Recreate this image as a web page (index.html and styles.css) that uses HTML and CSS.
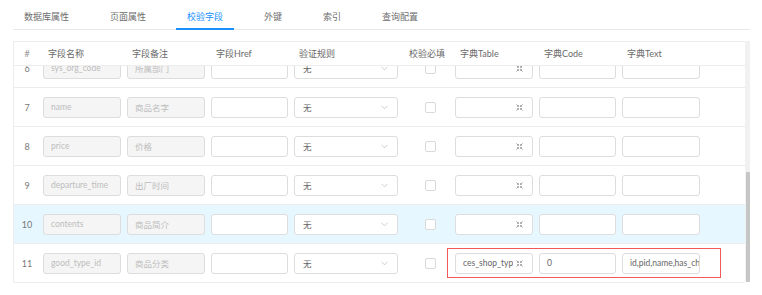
FILE: index.html
```html
<!DOCTYPE html>
<html lang="zh">
<head>
<meta charset="utf-8">
<link rel="stylesheet" href="styles.css">
</head>
<body>
<div class="page">
  <div class="tabs">
    <div class="tab">数据库属性</div>
    <div class="tab">页面属性</div>
    <div class="tab active">校验字段</div>
    <div class="tab">外键</div>
    <div class="tab">索引</div>
    <div class="tab">查询配置</div>
  </div>
  <div class="table-wrap">
    <div class="table">
      <div class="row head">
        <div class="c num">#</div>
        <div class="c">字段名称</div>
        <div class="c">字段备注</div>
        <div class="c">字段Href</div>
        <div class="c">验证规则</div>
        <div class="c">校验必填</div>
        <div class="c">字典Table</div>
        <div class="c">字典Code</div>
        <div class="c">字典Text</div>
        <div class="c"></div>
      </div>
      <div class="body">
        <div class="row first">
          <div class="c num">6</div>
          <div class="c"><div class="inp dis">sys_org_code</div></div>
          <div class="c"><div class="inp dis">所属部门</div></div>
          <div class="c"><div class="inp"></div></div>
          <div class="c"><div class="sel"><span>无</span><svg class="arrow" viewBox="0 0 8 5"><polyline points="0.5,0.5 4,4 7.5,0.5"/></svg></div></div>
          <div class="c chk"><div class="box"></div></div>
          <div class="c"><div class="inp icon-inp"><span class="val"></span><svg class="ex" viewBox="0 0 8 8"><path d="M0.5 0.5 L2.8 2.8 M2.8 1.4 V2.8 H1.4 M7.5 0.5 L5.2 2.8 M5.2 1.4 V2.8 H6.6 M0.5 7.5 L2.8 5.2 M2.8 6.6 V5.2 H1.4 M7.5 7.5 L5.2 5.2 M5.2 6.6 V5.2 H6.6"/></svg></div></div>
          <div class="c"><div class="inp"></div></div>
          <div class="c"><div class="inp"></div></div>
          <div class="c"></div>
        </div>
        <div class="row">
          <div class="c num">7</div>
          <div class="c"><div class="inp dis">name</div></div>
          <div class="c"><div class="inp dis">商品名字</div></div>
          <div class="c"><div class="inp"></div></div>
          <div class="c"><div class="sel"><span>无</span><svg class="arrow" viewBox="0 0 8 5"><polyline points="0.5,0.5 4,4 7.5,0.5"/></svg></div></div>
          <div class="c chk"><div class="box"></div></div>
          <div class="c"><div class="inp icon-inp"><span class="val"></span><svg class="ex" viewBox="0 0 8 8"><path d="M0.5 0.5 L2.8 2.8 M2.8 1.4 V2.8 H1.4 M7.5 0.5 L5.2 2.8 M5.2 1.4 V2.8 H6.6 M0.5 7.5 L2.8 5.2 M2.8 6.6 V5.2 H1.4 M7.5 7.5 L5.2 5.2 M5.2 6.6 V5.2 H6.6"/></svg></div></div>
          <div class="c"><div class="inp"></div></div>
          <div class="c"><div class="inp"></div></div>
          <div class="c"></div>
        </div>
        <div class="row">
          <div class="c num">8</div>
          <div class="c"><div class="inp dis">price</div></div>
          <div class="c"><div class="inp dis">价格</div></div>
          <div class="c"><div class="inp"></div></div>
          <div class="c"><div class="sel"><span>无</span><svg class="arrow" viewBox="0 0 8 5"><polyline points="0.5,0.5 4,4 7.5,0.5"/></svg></div></div>
          <div class="c chk"><div class="box"></div></div>
          <div class="c"><div class="inp icon-inp"><span class="val"></span><svg class="ex" viewBox="0 0 8 8"><path d="M0.5 0.5 L2.8 2.8 M2.8 1.4 V2.8 H1.4 M7.5 0.5 L5.2 2.8 M5.2 1.4 V2.8 H6.6 M0.5 7.5 L2.8 5.2 M2.8 6.6 V5.2 H1.4 M7.5 7.5 L5.2 5.2 M5.2 6.6 V5.2 H6.6"/></svg></div></div>
          <div class="c"><div class="inp"></div></div>
          <div class="c"><div class="inp"></div></div>
          <div class="c"></div>
        </div>
        <div class="row">
          <div class="c num">9</div>
          <div class="c"><div class="inp dis">departure_time</div></div>
          <div class="c"><div class="inp dis">出厂时间</div></div>
          <div class="c"><div class="inp"></div></div>
          <div class="c"><div class="sel"><span>无</span><svg class="arrow" viewBox="0 0 8 5"><polyline points="0.5,0.5 4,4 7.5,0.5"/></svg></div></div>
          <div class="c chk"><div class="box"></div></div>
          <div class="c"><div class="inp icon-inp"><span class="val"></span><svg class="ex" viewBox="0 0 8 8"><path d="M0.5 0.5 L2.8 2.8 M2.8 1.4 V2.8 H1.4 M7.5 0.5 L5.2 2.8 M5.2 1.4 V2.8 H6.6 M0.5 7.5 L2.8 5.2 M2.8 6.6 V5.2 H1.4 M7.5 7.5 L5.2 5.2 M5.2 6.6 V5.2 H6.6"/></svg></div></div>
          <div class="c"><div class="inp"></div></div>
          <div class="c"><div class="inp"></div></div>
          <div class="c"></div>
        </div>
        <div class="row hl">
          <div class="c num">10</div>
          <div class="c"><div class="inp dis">contents</div></div>
          <div class="c"><div class="inp dis">商品简介</div></div>
          <div class="c"><div class="inp"></div></div>
          <div class="c"><div class="sel"><span>无</span><svg class="arrow" viewBox="0 0 8 5"><polyline points="0.5,0.5 4,4 7.5,0.5"/></svg></div></div>
          <div class="c chk"><div class="box"></div></div>
          <div class="c"><div class="inp icon-inp"><span class="val"></span><svg class="ex" viewBox="0 0 8 8"><path d="M0.5 0.5 L2.8 2.8 M2.8 1.4 V2.8 H1.4 M7.5 0.5 L5.2 2.8 M5.2 1.4 V2.8 H6.6 M0.5 7.5 L2.8 5.2 M2.8 6.6 V5.2 H1.4 M7.5 7.5 L5.2 5.2 M5.2 6.6 V5.2 H6.6"/></svg></div></div>
          <div class="c"><div class="inp"></div></div>
          <div class="c"><div class="inp"></div></div>
          <div class="c"></div>
        </div>
        <div class="row last">
          <div class="c num">11</div>
          <div class="c"><div class="inp dis">good_type_id</div></div>
          <div class="c"><div class="inp dis">商品分类</div></div>
          <div class="c"><div class="inp"></div></div>
          <div class="c"><div class="sel"><span>无</span><svg class="arrow" viewBox="0 0 8 5"><polyline points="0.5,0.5 4,4 7.5,0.5"/></svg></div></div>
          <div class="c chk"><div class="box"></div></div>
          <div class="c"><div class="inp icon-inp"><span class="val">ces_shop_type</span><svg class="ex" viewBox="0 0 8 8"><path d="M0.5 0.5 L2.8 2.8 M2.8 1.4 V2.8 H1.4 M7.5 0.5 L5.2 2.8 M5.2 1.4 V2.8 H6.6 M0.5 7.5 L2.8 5.2 M2.8 6.6 V5.2 H1.4 M7.5 7.5 L5.2 5.2 M5.2 6.6 V5.2 H6.6"/></svg></div></div>
          <div class="c"><div class="inp val-inp">0</div></div>
          <div class="c"><div class="inp val-inp">id,pid,name,has_child</div></div>
          <div class="c"></div>
          <div class="mark"></div>
        </div>
      </div>
    </div>
    <div class="scrollbar"><div class="thumb"></div></div>
  </div>
</div>
</body>
</html>
```

FILE: styles.css
```css
* { box-sizing: border-box; }
html, body { margin: 0; padding: 0; background: #fff; }
body {
  font-family: Lato, "Noto Sans CJK SC", sans-serif;
  font-size: 9px;
  font-weight: 400;
  color: #666;
}
.page {
  width: 762px;
  height: 295px;
  padding: 0 12px 0 13px;
  overflow: hidden;
}
.tabs {
  display: flex;
  gap: 19px;
  height: 30px;
  border-bottom: 1px solid #e8e8e8;
}
.tab {
  height: 30px;
  margin-bottom: -1px;
  padding: 5px 11px 0;
  border-bottom: 2px solid transparent;
  display: flex;
  align-items: center;
  color: #6e6e6e;
  white-space: nowrap;
}
.tab.active {
  color: #1890ff;
  border-bottom-color: #1890ff;
}
.table-wrap {
  margin-top: 11px;
  display: flex;
}
.table {
  width: 732px;
  border-top: 1px solid #ededed;
  border-left: 1px solid #ededed;
}
.row {
  display: grid;
  grid-template-columns: 26px 84px 84px 83px 110px 51px 84px 83px 84px 1fr;
  height: 39px;
  border-bottom: 1px solid #ededed;
  align-items: center;
  position: relative;
}
.row.head {
  height: 24px;
  color: #6a6a6a;
}
.row.head .c { padding-left: 8px; white-space: nowrap; }
.row.head .c.num { padding-left: 0; color: #999; }
.c { padding: 0 3px; min-width: 0; }
.c.num { text-align: center; padding: 0; color: #777; }
.body {
  height: 217px;
  overflow: hidden;
}
.row.first { margin-top: -17px; }
.row.hl { background: #e6f7ff; }
.inp {
  height: 21px;
  border: 1px solid #dddddd;
  border-radius: 3px;
  background: #fff;
  padding: 0 7px;
  display: flex;
  align-items: center;
  white-space: nowrap;
  overflow: hidden;
  color: #666;
  font-size: 8.5px;
}
.inp.dis {
  background: #f5f5f5;
  color: #bdbdbd;
}
.icon-inp { padding-right: 9px; }
.icon-inp .val {
  flex: 1;
  overflow: hidden;
  white-space: nowrap;
  min-width: 0;
}
.ex {
  width: 7px;
  height: 7px;
  flex: none;
  margin-left: 3px;
  fill: none;
  stroke: #8a8a8a;
  stroke-width: 0.9;
}
.sel {
  height: 21px;
  border: 1px solid #dddddd;
  border-radius: 3px;
  background: #fff;
  padding: 0 9px 0 8px;
  display: flex;
  align-items: center;
  justify-content: space-between;
  color: #666;
  font-size: 8.5px;
}
.arrow {
  width: 7px;
  height: 5px;
  fill: none;
  stroke: #c0c0c0;
  stroke-width: 0.9;
}
.chk { display: flex; justify-content: center; padding-left: 10px; }
.box {
  width: 11px;
  height: 11px;
  border: 1px solid #d9d9d9;
  border-radius: 2px;
  background: #fff;
}
.mark {
  position: absolute;
  left: 433px;
  top: 4px;
  width: 274px;
  height: 30px;
  border: 1px solid #f25a5a;
  pointer-events: none;
}
.scrollbar {
  width: 5px;
  height: 241px;
  background: #f1f1f1;
  display: flex;
  flex-direction: column;
  justify-content: flex-end;
  align-items: center;
}
.thumb {
  width: 4px;
  height: 110px;
  background: #c6c6c6;
  border-radius: 1px;
}
```
